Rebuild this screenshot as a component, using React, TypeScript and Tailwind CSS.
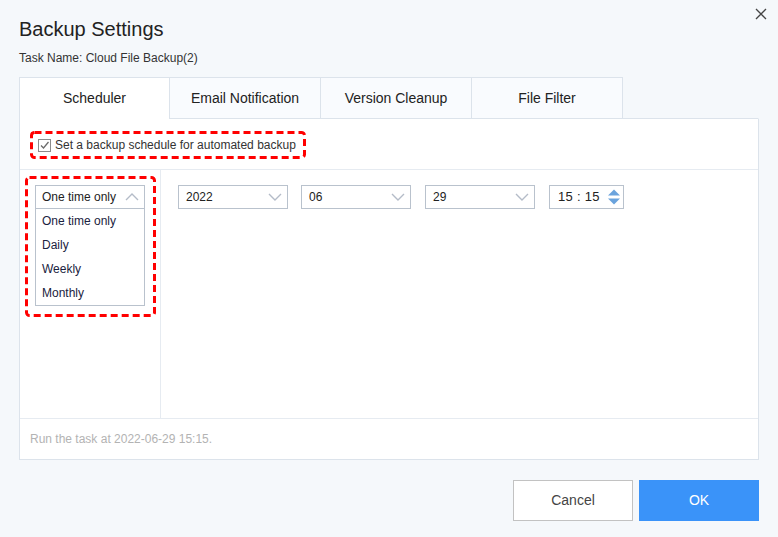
import React from "react";

const Chevron = ({ up = false }: { up?: boolean }) => (
  <svg width="14" height="8" viewBox="0 0 14 8" className="shrink-0">
    <path
      d={up ? "M1 7 L7 1 L13 7" : "M1 1 L7 7 L13 1"}
      fill="none"
      stroke="#b4bcc8"
      strokeWidth="1.4"
    />
  </svg>
);

const DashedFrame = ({ w, h }: { w: number; h: number }) => (
  <svg width={w} height={h} className="absolute left-0 top-0 pointer-events-none">
    <rect
      x="1.5"
      y="1.5"
      width={w - 3}
      height={h - 3}
      rx="3"
      fill="none"
      stroke="#ff0000"
      strokeWidth="3"
      strokeDasharray="7 4"
    />
  </svg>
);

const DateSelect = ({ value }: { value: string }) => (
  <div className="w-[110px] h-[24px] border border-[#b9c2cd] bg-white flex items-center justify-between pl-[7px] pr-[5px]">
    <span className="text-[12px] text-[#222]">{value}</span>
    <Chevron />
  </div>
);

export default function App() {
  const tabs = ["Scheduler", "Email Notification", "Version Cleanup", "File Filter"];
  return (
    <div
      className="relative w-[778px] h-[537px] bg-[#f5f8fb] px-[19px] overflow-hidden"
      style={{ fontFamily: '"Liberation Sans", Arial, sans-serif' }}
    >
      <button className="absolute right-[10px] top-[7px] w-[14px] h-[14px]">
        <svg width="14" height="14" viewBox="0 0 14 14">
          <path d="M2 2 L12 12 M12 2 L2 12" stroke="#444" strokeWidth="1.3" />
        </svg>
      </button>
      <div className="pt-[17px] text-[20px] leading-[24px] text-[#222]">Backup Settings</div>
      <div className="mt-[9px] text-[12px] leading-[16px] text-[#333]">Task Name: Cloud File Backup(2)</div>

      <div className="mt-[11px] flex">
        {tabs.map((t, i) => (
          <div
            key={t}
            className={
              i === 0
                ? "w-[151px] h-[42px] border-t border-l border-r border-[#dce3eb] bg-white flex items-center justify-center text-[14px] text-[#222]"
                : "w-[151px] h-[42px] border-t border-r border-b border-[#dce3eb] bg-[#f9fbfe] flex items-center justify-center text-[14px] text-[#222]"
            }
          >
            {t}
          </div>
        ))}
        <div className="flex-1 h-[42px] border-b border-r border-b-[#dce3eb] border-r-transparent" />
      </div>

      <div className="h-[341px] border-x border-b border-[#dce3eb] bg-white flex flex-col">
        <div className="h-[51px] border-b border-[#e6ebf1] pt-[12px] pl-[10px]">
          <div className="relative w-[276px] h-[28px] flex items-center pl-[8px] gap-[4px]">
            <DashedFrame w={276} h={28} />
            <div className="w-[13px] h-[13px] border border-[#8c8c8c] bg-white flex items-center justify-center">
              <svg width="11" height="11" viewBox="0 0 11 11">
                <path d="M2 5.5 L4.5 8 L9.5 2" fill="none" stroke="#6b6b6b" strokeWidth="1.3" />
              </svg>
            </div>
            <span className="text-[12px] text-[#333]">Set a backup schedule for automated backup</span>
          </div>
        </div>

        <div className="flex-1 flex">
          <div className="w-[141px] border-r border-[#e6ebf1] pt-[6px] pl-[5px]">
            <div className="relative w-[131px] h-[141px] pt-[9px] pl-[10px]">
              <DashedFrame w={131} h={141} />
              <div className="w-[110px] border border-[#b9c2cd] bg-white">
                <div className="h-[23px] border-b border-[#b9c2cd] flex items-center justify-between pl-[6px] pr-[5px]">
                  <span className="text-[12px] text-[#222]">One time only</span>
                  <Chevron up />
                </div>
                {["One time only", "Daily", "Weekly", "Monthly"].map((o) => (
                  <div key={o} className="h-[24px] flex items-center pl-[6px] text-[12px] text-[#1a2240]">
                    {o}
                  </div>
                ))}
              </div>
            </div>
          </div>
          <div className="flex-1 pt-[15px] pl-[17px] flex items-start gap-[13px]">
            <DateSelect value="2022" />
            <DateSelect value="06" />
            <div className="ml-[1px]">
              <DateSelect value="29" />
            </div>
            <div className="ml-[1px] w-[75px] h-[24px] border border-[#b9c2cd] bg-white flex items-center pl-[8px] pr-[2px] justify-between">
              <span className="text-[13px] text-[#222] tracking-[0.3px]">15 : 15</span>
              <svg width="14" height="18" viewBox="0 0 14 18">
                <path d="M1 7.5 L7 1.5 L13 7.5 Z" fill="#6aa3dd" />
                <path d="M1 10.5 L7 16.5 L13 10.5 Z" fill="#6aa3dd" />
              </svg>
            </div>
          </div>
        </div>

        <div className="h-[41px] border-t border-[#e6ebf1] flex items-center pl-[10px] text-[12px] text-[#b3b3b3]">
          Run the task at 2022-06-29 15:15.
        </div>
      </div>

      <div className="mt-[20px] flex justify-end gap-[6px]">
        <button className="w-[120px] h-[41px] border border-[#c2c2c2] bg-white text-[14px] text-[#444]">Cancel</button>
        <button className="w-[120px] h-[41px] bg-[#3a93f9] text-[14px] text-white">OK</button>
      </div>
    </div>
  );
}
